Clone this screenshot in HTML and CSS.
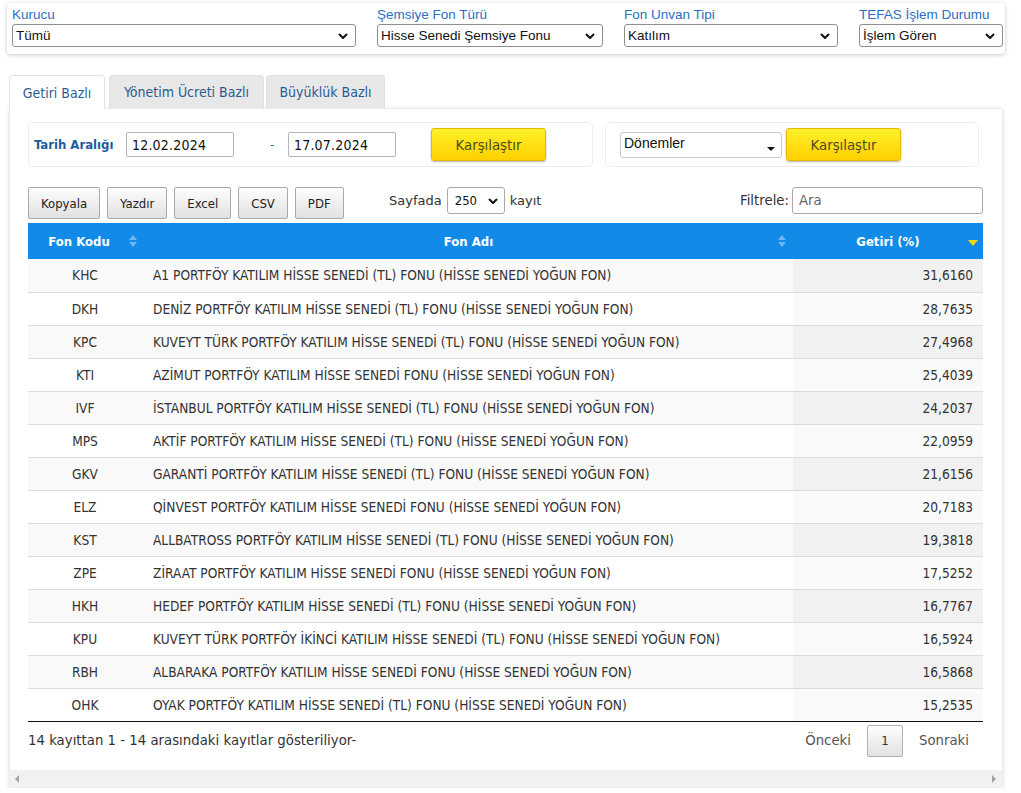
FILE: index.html
```html
<!DOCTYPE html>
<html lang="tr">
<head>
<meta charset="utf-8">
<title>Fon Getiri Karşılaştırma</title>
<link rel="stylesheet" href="styles.css">
</head>
<body>
<div class="filters">
  <div class="fgroup g1">
    <label class="flabel">Kurucu</label>
    <div class="sel"><span>Tümü</span><svg class="chev" viewBox="0 0 10 6" width="10" height="6"><path d="M1 1 L5 5 L9 1" fill="none" stroke="#111" stroke-width="2"/></svg></div>
  </div>
  <div class="fgroup g2">
    <label class="flabel">Şemsiye Fon Türü</label>
    <div class="sel"><span>Hisse Senedi Şemsiye Fonu</span><svg class="chev" viewBox="0 0 10 6" width="10" height="6"><path d="M1 1 L5 5 L9 1" fill="none" stroke="#111" stroke-width="2"/></svg></div>
  </div>
  <div class="fgroup g3">
    <label class="flabel">Fon Unvan Tipi</label>
    <div class="sel"><span>Katılım</span><svg class="chev" viewBox="0 0 10 6" width="10" height="6"><path d="M1 1 L5 5 L9 1" fill="none" stroke="#111" stroke-width="2"/></svg></div>
  </div>
  <div class="fgroup g4">
    <label class="flabel">TEFAS İşlem Durumu</label>
    <div class="sel"><span>İşlem Gören</span><svg class="chev" viewBox="0 0 10 6" width="10" height="6"><path d="M1 1 L5 5 L9 1" fill="none" stroke="#111" stroke-width="2"/></svg></div>
  </div>
</div>

<div class="tabs">
  <div class="tab active t1">Getiri Bazlı</div>
  <div class="tab t2">Yönetim Ücreti Bazlı</div>
  <div class="tab t3">Büyüklük Bazlı</div>
</div>

<div class="panel">
  <div class="panel-body">
    <div class="daterow">
      <div class="box box1">
        <span class="dlabel">Tarih Aralığı</span>
        <div class="dinput">12.02.2024</div>
        <span class="dash">-</span>
        <div class="dinput">17.07.2024</div>
        <button class="ybtn yb1">Karşılaştır</button>
      </div>
      <div class="box box2">
        <div class="psel"><span>Dönemler</span><svg class="tri" viewBox="0 0 8 4" width="8" height="4"><path d="M0 0 L8 0 L4 4 Z" fill="#111"/></svg></div>
        <button class="ybtn">Karşılaştır</button>
      </div>
    </div>

    <div class="toolrow">
      <div class="btns">
        <button class="gbtn">Kopyala</button>
        <button class="gbtn">Yazdır</button>
        <button class="gbtn">Excel</button>
        <button class="gbtn">CSV</button>
        <button class="gbtn">PDF</button>
      </div>
      <div class="length">Sayfada <div class="lsel"><span>250</span><svg class="chev" viewBox="0 0 10 6" width="10" height="6"><path d="M1 1 L5 5 L9 1" fill="none" stroke="#111" stroke-width="2"/></svg></div> kayıt</div>
      <div class="filter">Filtrele: <div class="finput">Ara</div></div>
    </div>

    <table class="grid">
      <colgroup><col class="c1"><col class="c2"><col class="c3"></colgroup>
      <thead>
        <tr>
          <th class="h1">Fon Kodu<svg class="sort" viewBox="0 0 8 12" width="8" height="12"><path d="M0 5 L4 0 L8 5 Z M0 7 L8 7 L4 12 Z" fill="#72b5ef"/></svg></th>
          <th class="h2">Fon Adı<svg class="sort" viewBox="0 0 8 12" width="8" height="12"><path d="M0 5 L4 0 L8 5 Z M0 7 L8 7 L4 12 Z" fill="#72b5ef"/></svg></th>
          <th class="h3">Getiri (%)<svg class="sortd" viewBox="0 0 10 6" width="10" height="6"><path d="M0 0 L10 0 L5 6 Z" fill="#f5d60c"/></svg></th>
        </tr>
      </thead>
      <tbody>
        <tr><td>KHC</td><td>A1 PORTFÖY KATILIM HİSSE SENEDİ (TL) FONU (HİSSE SENEDİ YOĞUN FON)</td><td>31,6160</td></tr>
        <tr><td>DKH</td><td>DENİZ PORTFÖY KATILIM HİSSE SENEDİ (TL) FONU (HİSSE SENEDİ YOĞUN FON)</td><td>28,7635</td></tr>
        <tr><td>KPC</td><td>KUVEYT TÜRK PORTFÖY KATILIM HİSSE SENEDİ (TL) FONU (HİSSE SENEDİ YOĞUN FON)</td><td>27,4968</td></tr>
        <tr><td>KTI</td><td>AZİMUT PORTFÖY KATILIM HİSSE SENEDİ FONU (HİSSE SENEDİ YOĞUN FON)</td><td>25,4039</td></tr>
        <tr><td>IVF</td><td>İSTANBUL PORTFÖY KATILIM HİSSE SENEDİ (TL) FONU (HİSSE SENEDİ YOĞUN FON)</td><td>24,2037</td></tr>
        <tr><td>MPS</td><td>AKTİF PORTFÖY KATILIM HİSSE SENEDİ (TL) FONU (HİSSE SENEDİ YOĞUN FON)</td><td>22,0959</td></tr>
        <tr><td>GKV</td><td>GARANTİ PORTFÖY KATILIM HİSSE SENEDİ (TL) FONU (HİSSE SENEDİ YOĞUN FON)</td><td>21,6156</td></tr>
        <tr><td>ELZ</td><td>QİNVEST PORTFÖY KATILIM HİSSE SENEDİ FONU (HİSSE SENEDİ YOĞUN FON)</td><td>20,7183</td></tr>
        <tr><td>KST</td><td>ALLBATROSS PORTFÖY KATILIM HİSSE SENEDİ (TL) FONU (HİSSE SENEDİ YOĞUN FON)</td><td>19,3818</td></tr>
        <tr><td>ZPE</td><td>ZİRAAT PORTFÖY KATILIM HİSSE SENEDİ FONU (HİSSE SENEDİ YOĞUN FON)</td><td>17,5252</td></tr>
        <tr><td>HKH</td><td>HEDEF PORTFÖY KATILIM HİSSE SENEDİ (TL) FONU (HİSSE SENEDİ YOĞUN FON)</td><td>16,7767</td></tr>
        <tr><td>KPU</td><td>KUVEYT TÜRK PORTFÖY İKİNCİ KATILIM HİSSE SENEDİ (TL) FONU (HİSSE SENEDİ YOĞUN FON)</td><td>16,5924</td></tr>
        <tr><td>RBH</td><td>ALBARAKA PORTFÖY KATILIM HİSSE SENEDİ FONU (HİSSE SENEDİ YOĞUN FON)</td><td>16,5868</td></tr>
        <tr><td>OHK</td><td>OYAK PORTFÖY KATILIM HİSSE SENEDİ (TL) FONU (HİSSE SENEDİ YOĞUN FON)</td><td>15,2535</td></tr>
      </tbody>
    </table>

    <div class="footer">
      <div class="info">14 kayıttan 1 - 14 arasındaki kayıtlar gösteriliyor-</div>
      <div class="pager">
        <span class="pl">Önceki</span>
        <span class="pbtn">1</span>
        <span class="pl last">Sonraki</span>
      </div>
    </div>
  </div>
  <div class="hscroll">
    <svg viewBox="0 0 4 8" width="4" height="8"><path d="M4 0 L0 4 L4 8 Z" fill="#a3a3a3"/></svg>
    <svg viewBox="0 0 4 8" width="4" height="8"><path d="M0 0 L4 4 L0 8 Z" fill="#a3a3a3"/></svg>
  </div>
</div>
</body>
</html>
```

FILE: styles.css
```css
* { box-sizing: border-box; }
html, body { margin: 0; padding: 0; background: #fff; }
body {
  font-family: "DejaVu Sans Condensed", "DejaVu Sans", sans-serif;
  font-size: 13px;
  color: #333;
}

/* top filter card */
.filters {
  margin: 3px 16px 0 7px;
  height: 51px;
  padding: 4px 2px 0 5px;
  display: flex;
  gap: 21px;
  border-radius: 4px;
  box-shadow: 0 1px 4px rgba(0,0,0,0.22);
  font-family: "Liberation Sans", Arial, sans-serif;
}
.fgroup { display: flex; flex-direction: column; }
.g1 { width: 344px; }
.g2 { width: 226px; }
.g3 { width: 214px; }
.g4 { width: 144px; }
.flabel { color: #2c6ec4; font-size: 13.5px; line-height: 16px; height: 17px; }
.sel {
  height: 23px;
  border: 1px solid #8f8f8f;
  border-radius: 3px;
  display: flex;
  align-items: center;
  justify-content: space-between;
  padding: 0 7px 0 3px;
  font-size: 13.5px;
  color: #111;
  background: #fff;
}
.chev { flex: none; }

/* tabs */
.tabs {
  margin: 21px 0 0 9px;
  display: flex;
  height: 33px;
  position: relative;
  z-index: 2;
}
.tab {
  height: 33px;
  background: #e8e8e8;
  border: 1px solid #e0e0e0;
  border-bottom: none;
  border-radius: 4px 4px 0 0;
  color: #275b94;
  display: flex;
  align-items: center;
  justify-content: center;
  font-size: 14px;
}
.tab.active { background: #fff; height: 34px; border-color: #e3e3e3; color: #2d5f96; }
.t1 { width: 96px; margin-right: 4px; }
.t2 { width: 155px; margin-right: 2px; }
.t3 { width: 119px; }

/* panel */
.panel {
  margin: 0 18px 0 9px;
  height: 680px;
  border: 1px solid #ececec;
  box-shadow: 0 1px 4px rgba(0,0,0,0.15);
  border-radius: 0 3px 3px 3px;
  display: flex;
  flex-direction: column;
  overflow: hidden;
}
.panel-body { flex: 1; padding: 13px 19px 0 18px; }
.hscroll {
  height: 17px;
  background: #f1f1f1;
  display: flex;
  align-items: center;
  justify-content: space-between;
  padding: 0 6px 0 5px;
}

/* date row */
.daterow { display: flex; gap: 12px; height: 45px; }
.box {
  border: 1px solid #ededed;
  border-radius: 5px;
  display: flex;
  align-items: center;
}
.box1 { width: 565px; padding-left: 5px; }
.box2 { width: 374px; padding-left: 14px; }
.dlabel { color: #1d5d9c; font-weight: bold; font-size: 13px; width: 92px; }
.dinput {
  width: 108px;
  height: 25px;
  border: 1px solid #b5b5b5;
  border-radius: 2px;
  padding: 0 5px;
  display: flex;
  align-items: center;
  font-size: 14px;
  color: #111;
  letter-spacing: 0.2px;
}
.dash { width: 54px; padding-left: 36px; color: #2d6ab0; }
.ybtn {
  width: 115px;
  height: 33px;
  border: 1px solid #e8b800;
  border-radius: 3px;
  background: linear-gradient(#fff02a, #ffd000);
  box-shadow: 0 1px 2px rgba(0,0,0,0.3);
  color: #4d4a20;
  font-family: "DejaVu Sans Condensed", "DejaVu Sans", sans-serif;
  font-size: 14.8px;
  padding: 0;
}
.yb1 { margin-left: 35px; }
.psel {
  width: 162px;
  height: 26px;
  border: 1px solid #c9c9c9;
  border-radius: 3px;
  display: flex;
  align-items: flex-start;
  justify-content: space-between;
  padding: 2px 6px 0 3px;
  font-family: "Liberation Sans", Arial, sans-serif;
  font-size: 14px;
  color: #111;
  margin-right: 4px;
}
.psel .tri { margin-top: 12px; }

/* tool row */
.toolrow {
  margin-top: 20px;
  height: 36px;
  display: flex;
  align-items: flex-start;
  font-family: "DejaVu Sans", sans-serif;
}
.btns { display: flex; gap: 7px; width: 361px; }
.gbtn {
  height: 32px;
  border: 1px solid #a9a9a9;
  border-radius: 2px;
  background: linear-gradient(#fdfdfd, #e1e1e1);
  font-family: "DejaVu Sans Condensed", "DejaVu Sans", sans-serif;
  font-size: 13px;
  color: #222;
  padding: 0 12px;
}
.length { display: flex; align-items: center; gap: 5px; height: 27px; color: #333; font-size: 13px; }
.lsel {
  width: 58px;
  height: 27px;
  border: 1px solid #a9a9a9;
  border-radius: 3px;
  display: flex;
  align-items: center;
  justify-content: space-between;
  padding: 0 6px 0 7px;
  font-size: 13px;
  color: #111;
  font-family: "DejaVu Sans Condensed", "DejaVu Sans", sans-serif;
}
.filter { margin-left: auto; display: flex; align-items: center; gap: 3px; height: 27px; font-size: 13.3px; }
.finput {
  width: 191px;
  height: 27px;
  border: 1px solid #a9a9a9;
  border-radius: 3px;
  padding: 0 6px;
  display: flex;
  align-items: center;
  color: #666;
}

/* table */
.grid { width: 955px; border-collapse: collapse; table-layout: fixed; }
.c1 { width: 116px; }
.c2 { width: 649px; }
.c3 { width: 190px; }
.grid th {
  background: #128be8;
  color: #fff;
  height: 36px;
  font-weight: bold;
  font-size: 13px;
  position: relative;
  text-align: center;
  padding: 0;
}
.h1 { padding-right: 14px !important; }
.sort { position: absolute; right: 7px; top: 12px; }
.sortd { position: absolute; right: 5px; top: 17px; }
.grid td {
  height: 33px;
  border-top: 1px solid #dcdcdc;
  padding: 0;
  color: #333;
  white-space: nowrap;
  font-size: 13.6px;
}
.grid tbody tr:first-child td { border-top: none; }
.grid tbody tr:last-child td { border-bottom: 1px solid #111; }
.grid td:nth-child(1) { text-align: center; padding-right: 2px; }
.grid td:nth-child(2) { padding-left: 9px; }
.grid td:nth-child(3) { text-align: right; padding-right: 10px; }
.grid tbody tr:nth-child(odd) td { background: #f9f9f9; }
.grid tbody tr:nth-child(odd) td:nth-child(3) { background: #f1f1f1; }
.grid tbody tr:nth-child(even) td { background: #fff; }
.grid tbody tr:nth-child(even) td:nth-child(3) { background: #fafafa; }

/* footer */
.footer {
  display: flex;
  justify-content: space-between;
  align-items: flex-start;
  margin-top: 3px;
  width: 955px;
  font-family: "DejaVu Sans", sans-serif;
  font-size: 13.3px;
}
.info { padding-top: 8px; color: #333; }
.pager { display: flex; align-items: center; }
.pl { color: #555; padding: 0 16px; }
.pl.last { padding-right: 14px; }
.pbtn {
  width: 36px;
  height: 32px;
  border: 1px solid #b0b0b0;
  border-radius: 2px;
  background: linear-gradient(#fdfdfd, #e2e2e2);
  display: flex;
  align-items: center;
  justify-content: center;
  color: #333;
  font-family: "DejaVu Sans Condensed", "DejaVu Sans", sans-serif;
  font-size: 13px;
}
```
